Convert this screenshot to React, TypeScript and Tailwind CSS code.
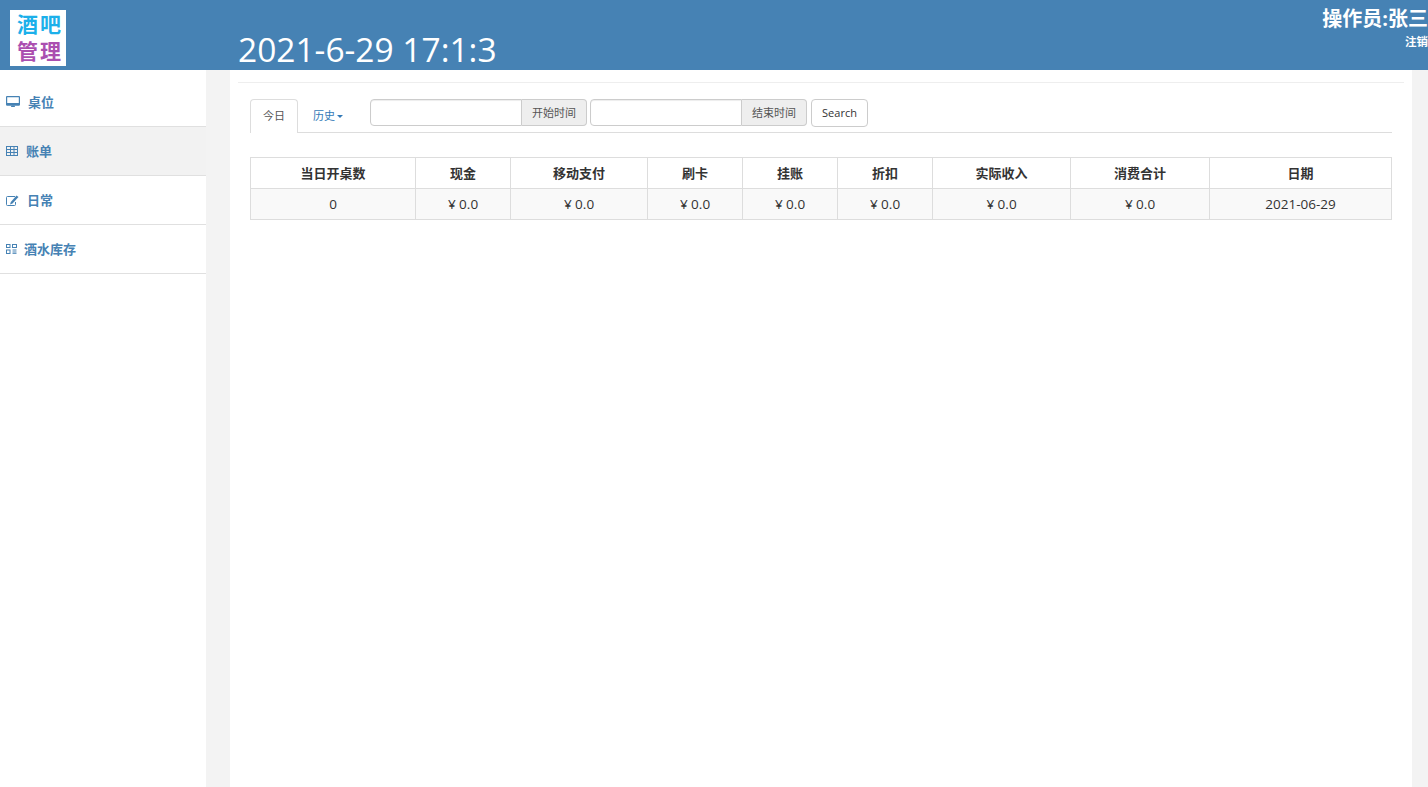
const font = "font-['Open_Sans','Noto_Sans_CJK_SC',sans-serif]";

const MonitorIcon = () => (
  <svg width="14" height="12" viewBox="0 0 14 12" className="shrink-0">
    <path d="M1 0h12a1 1 0 0 1 1 1v7.500a1 1 0 0 1-1 1H1a1 1 0 0 1-1-1V1a1 1 0 0 1 1-1zm.2 1.200v5.700h11.600V1.200z" fill="#4682b4" fillRule="evenodd" />
    <rect x="0.500" y="7" width="13" height="2.500" fill="#4682b4" />
    <path d="M5.500 9.500h3l.6 1.500H4.900z" fill="#4682b4" />
  </svg>
);

const TableIcon = () => (
  <svg width="12" height="10" viewBox="0 0 12 10" className="shrink-0" fill="none" stroke="#4682b4" strokeWidth="1">
    <rect x="0.500" y="0.500" width="11" height="9" />
    <path d="M0 3.500h12M0 6.500h12M4.500 0v10M8 0v10" />
  </svg>
);

const EditIcon = () => (
  <svg width="13" height="11" viewBox="0 0 13 11" className="shrink-0" fill="none">
    <path d="M9 1.500H1.500a1 1 0 0 0-1 1v7a1 1 0 0 0 1 1h7a1 1 0 0 0 1-1V7" stroke="#4682b4" />
    <path d="M10.500.500l2 1.500-6 6.500-2.500 1 .8-2.500z" fill="#4682b4" />
  </svg>
);

const GridIcon = () => (
  <svg width="11" height="10" viewBox="0 0 11 10" className="shrink-0" fill="none" stroke="#4682b4" strokeWidth="1">
    <rect x="0.500" y="0.500" width="3.500" height="3" />
    <rect x="6.500" y="0.500" width="4" height="3" />
    <rect x="0.500" y="6" width="3.500" height="3.500" />
    <path d="M6.500 6h4M6.500 8h4M6.500 9.700h4" />
  </svg>
);

const menu = [
  { label: "桌位", icon: <MonitorIcon />, gap: "gap-[8px]", active: false },
  { label: "账单", icon: <TableIcon />, gap: "gap-[8px]", active: true },
  { label: "日常", icon: <EditIcon />, gap: "gap-[8px]", active: false },
  { label: "酒水库存", icon: <GridIcon />, gap: "gap-[7px]", active: false },
];

const columns = [
  { title: "当日开桌数", value: "0", width: "w-[165px]" },
  { title: "现金", value: "¥ 0.0", width: "w-[95px]" },
  { title: "移动支付", value: "¥ 0.0", width: "w-[137px]" },
  { title: "刷卡", value: "¥ 0.0", width: "w-[95px]" },
  { title: "挂账", value: "¥ 0.0", width: "w-[95px]" },
  { title: "折扣", value: "¥ 0.0", width: "w-[95px]" },
  { title: "实际收入", value: "¥ 0.0", width: "w-[138px]" },
  { title: "消费合计", value: "¥ 0.0", width: "w-[139px]" },
  { title: "日期", value: "2021-06-29", width: "w-[182px]" },
];

function DateInput({ label }: { label: string }) {
  return (
    <div className="flex h-[27px] w-[217px]">
      <input className="h-full w-[152px] rounded-l-[4px] border border-[#ccc] bg-white shadow-[inset_0_1px_1px_rgba(0,0,0,0.075)]" />
      <span className="flex h-full w-[65px] items-center justify-center rounded-r-[4px] border border-l-0 border-[#ccc] bg-[#eee] pt-[1px] text-[11px] text-[#555]">
        {label}
      </span>
    </div>
  );
}

export default function App() {
  return (
    <div className={`flex h-[787px] w-[1428px] flex-col overflow-hidden bg-[#f3f3f3] ${font}`}>
      <header className="flex h-[70px] shrink-0 bg-[#4682b4] text-white">
        <div className="w-[238px] shrink-0 pl-[10px] pt-[10px]">
          <div className="h-[56px] w-[56px] bg-white pl-[7px] pt-[1px] text-[21px] font-bold leading-[27px] tracking-[2px]">
            <div className="text-[#1cb0ea]">酒吧</div>
            <div className="text-[#ab4fb0]">管理</div>
          </div>
        </div>
        <div className="flex-1 pt-[25px] text-[33.5px] leading-[48px]">2021-6-29 17:1:3</div>
        <div className="pt-[5px] text-right font-bold">
          <div className="whitespace-nowrap text-[20px] leading-[28px]">操作员:张三</div>
          <div className="pt-[1px] text-[11.500px] leading-[16px]">注销</div>
        </div>
      </header>

      <div className="flex min-h-0 flex-1">
        <nav className="w-[206px] shrink-0 bg-white pt-[8px]">
          {menu.map((item) => (
            <div
              key={item.label}
              className={`flex h-[49px] items-center border-b border-[#e0e0e0] pl-[6px] text-[13px] font-bold text-[#4682b4] ${item.gap} ${
                item.active ? "bg-[#f2f2f2]" : "bg-white"
              }`}
            >
              {item.icon}
              <span className="pt-[1px]">{item.label}</span>
            </div>
          ))}
        </nav>

        <main className="ml-[24px] w-[1182px] shrink-0 bg-white px-[8px] pt-[12px]">
          <div className="border-t border-[#eee] px-[12px] pt-[16px]">
            <div className="flex h-[34px] border-b border-[#ddd]">
              <div className="flex h-[34px] w-[48px] items-center justify-center rounded-t-[4px] border border-b-0 border-[#ddd] bg-white text-[11px] text-[#555]">
                今日
              </div>
              <div className="ml-[15px] flex h-[33px] items-center gap-[2px] pt-[1px] text-[11px] text-[#337ab7]">
                历史
                <span className="mt-[1px] border-x-[3px] border-t-[3px] border-x-transparent border-t-[#337ab7]" />
              </div>
              <div className="ml-[27px]">
                <DateInput label="开始时间" />
              </div>
              <div className="ml-[3px]">
                <DateInput label="结束时间" />
              </div>
              <button className="ml-[4px] h-[28px] w-[57px] rounded-[4px] border border-[#ccc] bg-white text-[11px] text-[#333]">
                Search
              </button>
            </div>

            <div className="mt-[24px] flex w-[1142px] border-l border-t border-[#ddd] text-[13px] text-[#333]">
              {columns.map((col) => (
                <div key={col.title} className={`${col.width} shrink-0 border-r border-[#ddd] text-center`}>
                  <div className="flex h-[31px] items-center justify-center border-b border-[#ddd] pt-[1px] font-bold">{col.title}</div>
                  <div className="flex h-[31px] items-center justify-center border-b border-[#ddd] bg-[#f9f9f9] pt-[1px] text-[13.500px]">{col.value}</div>
                </div>
              ))}
            </div>
          </div>
        </main>
      </div>
    </div>
  );
}
